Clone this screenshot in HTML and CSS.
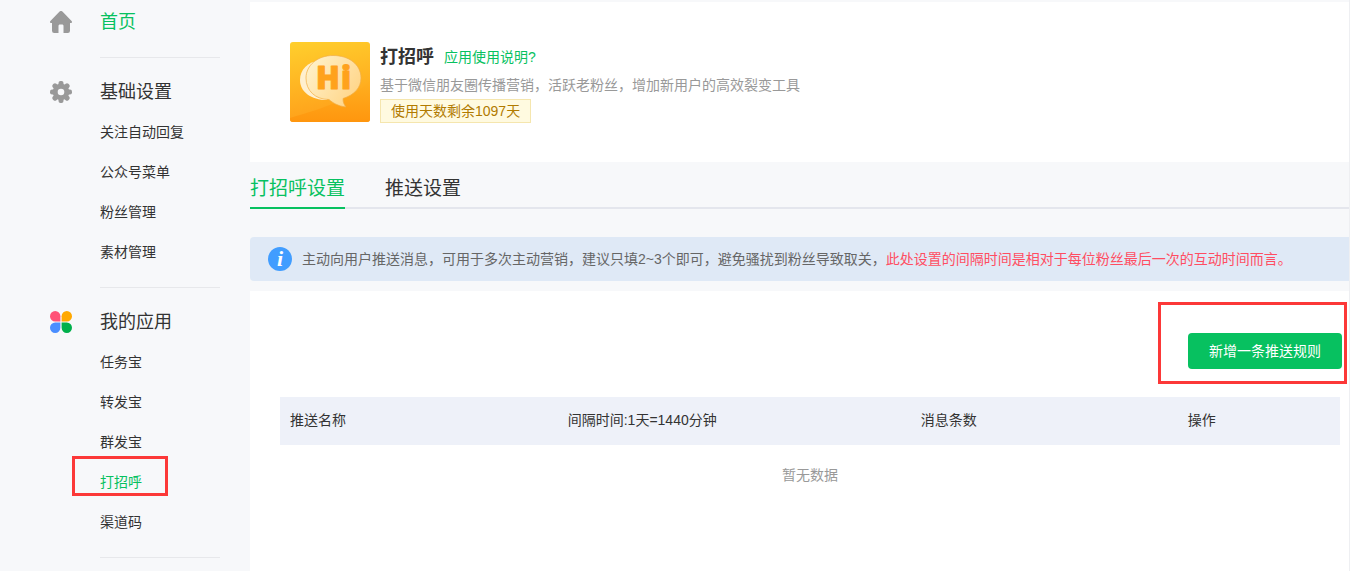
FILE: index.html
```html
<!DOCTYPE html>
<html lang="zh-CN">
<head>
<meta charset="utf-8">
<title>打招呼</title>
<link rel="stylesheet" href="styles.css">
</head>
<body>
<div class="layout">
  <nav class="sidebar">
    <section class="group group-home">
      <h2 class="group-title"><svg class="group-icon" viewBox="0 0 22 22" aria-hidden="true"><path fill="#999" d="M9.600.6a2 2 0 0 1 2.800 0l9.200 9.400c.8 1 .3 2-.8 2H20v7.800a2.200 2.200 0 0 1-2.200 2.200H13.500v-7c0-1-.5-1.500-1.500-1.500h-2c-1 0-1.500.5-1.500 1.500v7H4.200A2.200 2.200 0 0 1 2 19.800V12h-.8c-1.100 0-1.600-1-.8-2z"/></svg><a class="active" href="#">首页</a></h2>
    </section>
    <section class="group">
      <h2 class="group-title"><svg class="group-icon" viewBox="0 0 22 22" aria-hidden="true"><g fill="#999"><g id="teeth"><rect x="8.500" y="0" width="5" height="22" rx="2"/><rect x="0" y="8.500" width="22" height="5" rx="2"/></g><use href="#teeth" transform="rotate(45 11 11)"/><circle cx="11" cy="11" r="8.300"/></g><circle cx="11" cy="11" r="3.300" fill="#f7f8fa"/></svg>基础设置</h2>
      <ul class="menu">
        <li><a href="#">关注自动回复</a></li>
        <li><a href="#">公众号菜单</a></li>
        <li><a href="#">粉丝管理</a></li>
        <li><a href="#">素材管理</a></li>
      </ul>
    </section>
    <section class="group">
      <h2 class="group-title"><svg class="group-icon" viewBox="0 0 22 22" aria-hidden="true"><path fill="#ff5277" d="M5.200 0a5.200 5.200 0 0 1 5.200 5.200v5.200H5.200A5.200 5.200 0 0 1 5.200 0z"/><path fill="#ffa800" d="M16.800 0a5.200 5.200 0 0 1 0 10.400h-5.200V5.200A5.200 5.200 0 0 1 16.800 0z"/><path fill="#4a8eff" d="M5.200 11.600h5.200v5.200a5.200 5.200 0 1 1-5.200-5.200z"/><path fill="#00b04b" d="M11.600 11.600h5.200a5.200 5.200 0 1 1-5.200 5.200z"/></svg>我的应用</h2>
      <ul class="menu">
        <li><a href="#">任务宝</a></li>
        <li><a href="#">转发宝</a></li>
        <li><a href="#">群发宝</a></li>
        <li class="marked"><a class="active" href="#">打招呼</a></li>
        <li><a href="#">渠道码</a></li>
      </ul>
    </section>
  </nav>
  <main class="main">
    <header class="app">
      <svg class="app-logo" viewBox="0 0 80 80" aria-hidden="true">
        <defs>
          <linearGradient id="base" x1="0" y1="0" x2=".2" y2="1"><stop offset="0" stop-color="#ffcf2d"/><stop offset="1" stop-color="#ffa01a"/></linearGradient>
          <linearGradient id="shade" x1="0" y1="0" x2="0" y2="1"><stop offset="0" stop-color="#ffb020"/><stop offset="1" stop-color="#ff960e"/></linearGradient>
          <linearGradient id="bubble" x1="0" y1="0" x2="1" y2=".6"><stop offset="0" stop-color="#fff4d0"/><stop offset="1" stop-color="#ffd68a"/></linearGradient>
        </defs>
        <rect width="80" height="80" rx="3" fill="url(#base)"/>
        <path fill="url(#shade)" d="M80 38C64 56 34 66 0 76v1a3 3 0 0 0 3 3h74a3 3 0 0 0 3-3z"/>
        <path fill="#fff0cf" d="M31 18C17 20 10 28 10 38c0 12 11 20 27 20z"/>
        <path fill="url(#bubble)" stroke="#f0ae45" stroke-width=".7" d="M43 13.500c16 0 28 9 28 22.500 0 10-7 17-18 20.500 0 4 1 6 3 8.500-8-1-13-4-17-7.500-14 0-23-9-23-21.500 0-13 12-22.500 27-22.500z"/>
        <text class="logo-text" y="47"><tspan x="26">H</tspan><tspan x="51">i</tspan></text>
      </svg>
      <div class="app-info">
        <div class="app-heading"><h1 class="app-name">打招呼</h1><a class="help" href="#">应用使用说明?</a></div>
        <p class="app-desc">基于微信朋友圈传播营销，活跃老粉丝，增加新用户的高效裂变工具</p>
        <span class="days">使用天数剩余1097天</span>
      </div>
    </header>
    <div class="tabs">
      <a class="tab tab-active" href="#">打招呼设置</a>
      <a class="tab" href="#">推送设置</a>
    </div>
    <div class="notice">
      <svg class="notice-icon" viewBox="0 0 24 24" aria-hidden="true"><circle cx="12" cy="12" r="12" fill="#419dff"/><text class="notice-mark" x="12" y="19">i</text></svg>
      <p class="notice-text">主动向用户推送消息，可用于多次主动营销，建议只填2~3个即可，避免骚扰到粉丝导致取关，<span class="warn">此处设置的间隔时间是相对于每位粉丝最后一次的互动时间而言。</span></p>
    </div>
    <section class="panel">
      <div class="toolbar"><div class="add-wrap"><button class="add" type="button">新增一条推送规则</button></div></div>
      <table class="rules">
        <colgroup><col class="col-name"><col class="col-time"><col class="col-count"><col></colgroup>
        <thead><tr><th>推送名称</th><th>间隔时间:1天=1440分钟</th><th>消息条数</th><th>操作</th></tr></thead>
        <tbody><tr><td class="empty" colspan="4">暂无数据</td></tr></tbody>
      </table>
    </section>
  </main>
</div>
</body>
</html>
```
FILE: styles.css
```css
*,
*::before,
*::after {
  box-sizing: border-box;
}

body {
  margin: 0;
  background: #f7f8fa;
  color: #333;
  font-family: "Liberation Sans", "Noto Sans CJK SC", sans-serif;
  font-size: 14px;
  line-height: 20px;
}

h1, h2, p, ul {
  margin: 0;
  padding: 0;
  font-weight: 400;
}

a {
  color: inherit;
  text-decoration: none;
}

.layout {
  display: flex;
  min-height: 100vh;
}

.sidebar {
  flex: 0 0 250px;
  padding: 0 30px 0 50px;
}

.group {
  position: relative;
  padding: 14px 0 16px 50px;
}

.group::after {
  content: "";
  position: absolute;
  left: 50px;
  right: 0;
  bottom: 0;
  height: 1px;
  background: #e7e8eb;
}

.group-home {
  padding-top: 2px;
}

.group-title {
  display: flex;
  align-items: center;
  gap: 28px;
  height: 40px;
  margin-left: -50px;
  font-size: 18px;
}

.group-icon {
  width: 22px;
  height: 22px;
}

.menu {
  list-style: none;
}

.menu li {
  height: 40px;
  line-height: 40px;
}

.active {
  color: #07c160;
}

.marked {
  position: relative;
}

.marked::before {
  content: "";
  position: absolute;
  left: -28px;
  top: -6px;
  width: 96px;
  height: 40px;
  border: 3px solid #fc3838;
  pointer-events: none;
}

.main {
  flex: 1;
  min-width: 0;
  display: flex;
  flex-direction: column;
  padding-top: 2px;
  border-right: 1px solid #eeeff2;
}

.app {
  display: flex;
  gap: 10px;
  padding: 40px 40px 39px;
  background: #fff;
}

.app-logo {
  width: 80px;
  height: 80px;
  flex: none;
}

.logo-text {
  font: 800 31px "Open Sans", sans-serif;
  fill: #ffa21c;
  stroke: #ffa21c;
  stroke-width: 1;
  stroke-linejoin: round;
}

.app-heading {
  display: flex;
  align-items: center;
  gap: 10px;
  height: 30px;
}

.app-name {
  font-size: 18px;
  font-weight: 700;
}

.help {
  color: #07c160;
}

.app-desc {
  height: 27px;
  line-height: 27px;
  color: #999;
}

.days {
  display: inline-block;
  padding: 0 10px;
  border: 1px solid #f5e6ae;
  background: #fffae0;
  color: #b17a00;
  line-height: 22px;
}

.tabs {
  display: flex;
  gap: 40px;
  height: 47px;
  border-bottom: 2px solid #e4e6ed;
}

.tab {
  height: 47px;
  font-size: 19px;
  line-height: 54px;
}

.tab-active {
  border-bottom: 2px solid #07c160;
  color: #07c160;
}

.notice {
  display: flex;
  align-items: center;
  gap: 10px;
  min-height: 44px;
  margin-top: 28px;
  padding: 0 18px;
  border-radius: 4px 0 0 4px;
  background: #dfe9f6;
  color: #666;
}

.notice-icon {
  flex: none;
  width: 24px;
  height: 24px;
}

.notice-mark {
  font: italic 700 22px "Liberation Serif", serif;
  fill: #fff;
  text-anchor: middle;
}

.warn {
  color: #ff4d62;
}

.panel {
  flex: 1;
  margin-top: 10px;
  padding: 42px 9px 30px 30px;
  background: #fff;
}

.toolbar {
  display: flex;
  justify-content: flex-end;
  margin-right: -2px;
}

.add-wrap {
  position: relative;
}

.add-wrap::after {
  content: "";
  position: absolute;
  left: -30px;
  right: -5px;
  top: -31px;
  bottom: -15px;
  border: 3px solid #fc3838;
  pointer-events: none;
}

.add {
  display: block;
  height: 36px;
  padding: 0 21px;
  border: 0;
  border-radius: 4px;
  background: #07c160;
  color: #fff;
  font: inherit;
}

.rules {
  width: 100%;
  margin-top: 28px;
  border-collapse: collapse;
  table-layout: fixed;
}

.col-name {
  width: 26.2%;
}

.col-time {
  width: 33.3%;
}

.col-count {
  width: 25.2%;
}

.rules th {
  height: 48px;
  padding: 0 10px 2px;
  background: #eef1f9;
  font-weight: 400;
  text-align: left;
}

.rules .empty {
  height: 60px;
  padding: 0;
  color: #999;
  text-align: center;
}
```
